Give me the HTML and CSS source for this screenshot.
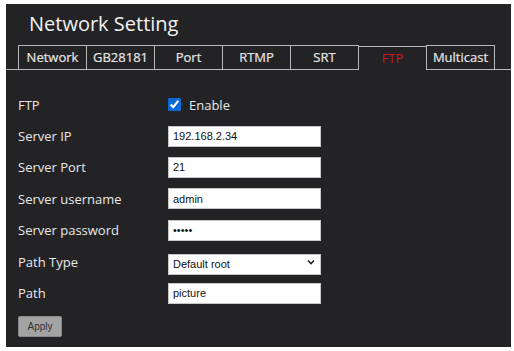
FILE: index.html
```html
<!DOCTYPE html>
<html lang="en">
<head>
  <meta charset="UTF-8">
  <title>Network Setting</title>
  <link rel="stylesheet" href="styles.css">
</head>
<body>
  <div class="page">
    <h1 class="title">Network Setting</h1>

    <!-- Tabs -->
    <ul class="tabs">
      <li class="tab">Network</li>
      <li class="tab">GB28181</li>
      <li class="tab">Port</li>
      <li class="tab">RTMP</li>
      <li class="tab">SRT</li>
      <li class="tab active">FTP</li>
      <li class="tab">Multicast</li>
    </ul>
    <!-- End Tabs -->

    <form class="form">
      <div class="row">
        <label class="label">FTP</label>
        <label class="check"><input type="checkbox" checked> Enable</label>
      </div>
      <div class="row">
        <label class="label">Server IP</label>
        <input class="field" type="text" value="192.168.2.34">
      </div>
      <div class="row">
        <label class="label">Server Port</label>
        <input class="field" type="text" value="21">
      </div>
      <div class="row">
        <label class="label">Server username</label>
        <input class="field" type="text" value="admin">
      </div>
      <div class="row">
        <label class="label">Server password</label>
        <input class="field" type="password" value="admin">
      </div>
      <div class="row">
        <label class="label">Path Type</label>
        <div class="select-wrap">
          <select class="field select">
            <option>Default root</option>
          </select>
          <svg class="chevron" width="8" height="6" viewBox="0 0 8 6">
            <path d="M1 1.5 L4 4.5 L7 1.5" fill="none" stroke="#222" stroke-width="1.6"/>
          </svg>
        </div>
      </div>
      <div class="row">
        <label class="label">Path</label>
        <input class="field" type="text" value="picture">
      </div>
      <button type="button" class="apply">Apply</button>
    </form>
  </div>
</body>
</html>
```

FILE: styles.css
```css
body {
  margin: 0;
  background: #fff;
  font-family: "Open Sans", "Noto Sans", sans-serif;
}

.page {
  margin: 4px 3px 4px 6px;
  height: 343px;
  background-color: #232326;
  color: #e8e8e8;
  overflow: hidden;
}

.title {
  margin: 0;
  padding: 7px 0 0 23px;
  height: 41px;
  box-sizing: border-box;
  font-size: 20px;
  font-weight: 400;
  line-height: 26px;
  color: #f2f2f2;
}

/* Tabs */
.tabs {
  list-style: none;
  margin: 0;
  padding: 0 0 0 12px;
  display: flex;
  border-bottom: 1px solid #b8b8b8;
  height: 24px;
}
.tab {
  width: 69px;
  height: 24px;
  box-sizing: border-box;
  border: 1px solid #b8b8b8;
  border-bottom: none;
  margin-right: -1px;
  text-align: center;
  font-size: 13px;
  line-height: 23px;
  color: #e6e6e6;
  -webkit-text-stroke: 0.2px #e6e6e6;
}
.tab.active {
  margin-top: 1px;
  height: 24px;
  background-color: #232326;
  color: #d4141b;
  -webkit-text-stroke: 0;
  position: relative;
  z-index: 1;
}
/* End Tabs */

.form {
  padding: 19px 0 0 12px;
}
.row {
  display: flex;
  align-items: center;
  height: 31.4px;
}
.label {
  width: 150px;
  font-size: 13px;
  color: #e8e8e8;
}
.check {
  display: flex;
  align-items: center;
  font-size: 13px;
  color: #e8e8e8;
}
.check input {
  width: 13px;
  height: 13px;
  margin: 0 8px 0 0;
  accent-color: #0b68d8;
}
.field {
  width: 153px;
  height: 21px;
  box-sizing: border-box;
  border: 1px solid #c8c8c8;
  border-radius: 0;
  background: #fff;
  padding: 0 4px;
  font-family: "Liberation Sans", Arial, sans-serif;
  font-size: 11px;
  color: #111;
  outline: none;
}
.select-wrap {
  position: relative;
  height: 21px;
}
.select {
  -webkit-appearance: none;
  appearance: none;
  padding: 0 4px;
}
.chevron {
  position: absolute;
  right: 6px;
  top: 8px;
  pointer-events: none;
}
.apply {
  margin-top: 7px;
  width: 44px;
  height: 21px;
  background-color: #a3a3a3;
  border: 1px solid #8a8a8a;
  border-radius: 2px;
  font-family: "Liberation Sans", Arial, sans-serif;
  font-size: 10px;
  color: #333;
  padding: 0;
}
```
